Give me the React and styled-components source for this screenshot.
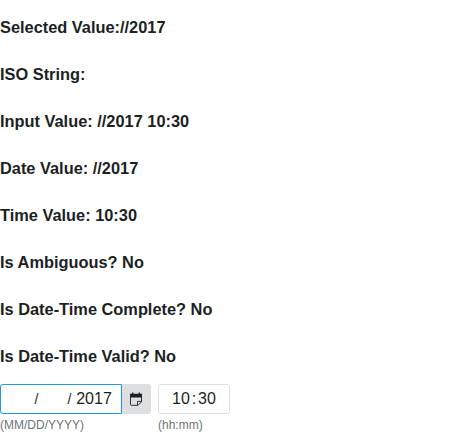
import React, { useState } from "react";
import styled, { createGlobalStyle } from "styled-components";

const GlobalStyle = createGlobalStyle`
  *, *::before, *::after { box-sizing: border-box; }
  body {
    margin: 0;
    background: #fff;
    color: #1c1f23;
    font-family: "Liberation Sans", Arial, sans-serif;
    font-size: 14px;
  }
`;

const Page = styled.main`
  padding-top: 14px;
`;

const Summary = styled.div`
  display: flex;
  flex-direction: column;
  gap: 21px;
`;

/* Keeps the browser's own h3 size, relative to the body text. */
const SummaryLine = styled.h3`
  margin: 0;
  line-height: 26px;
`;

const Fields = styled.form`
  display: flex;
  align-items: flex-start;
  gap: 7px;
  margin-top: 15px;
`;

const Field = styled.fieldset`
  min-width: 0;
  margin: 0;
  padding: 0;
  border: 0;
`;

const Control = styled.div`
  display: flex;
`;

const SegmentBox = styled.div`
  display: flex;
  align-items: center;
  gap: ${(p) => (p.$active ? 2 : 0)}px;
  height: 30px;
  padding: 0 ${(p) => (p.$active ? 7 : 13)}px;
  border: 1px solid ${(p) => (p.$active ? "#1c99e0" : "#dedfe0")};
  border-radius: ${(p) => (p.$active ? "3px 0 0 3px" : "3px")};
  background: #fff;
  font-size: 16px;
`;

const Segment = styled.input`
  width: ${(p) => p.$width}px;
  height: 26px;
  padding: 0;
  border: 0;
  outline: 0;
  background: transparent;
  color: inherit;
  font: inherit;
  text-align: center;
`;

const Separator = styled.span`
  width: ${(p) => p.$width}px;
  font-size: ${(p) => p.$size}px;
  line-height: 26px;
  text-align: center;
`;

const CalendarButton = styled.button`
  display: flex;
  align-items: center;
  width: 29px;
  height: 30px;
  padding: 0 8px;
  border: 0;
  border-radius: 0 3px 3px 0;
  background: #dedfe0;
  color: #1c1f23;
`;

const FormatHint = styled.div`
  margin-top: 4px;
  color: #707378;
  font-size: 12px;
  line-height: 14px;
`;

const summary = (v) => {
  const date = `${v.month}/${v.day}/${v.year}`;
  const time = `${v.hour}:${v.minute}`;
  return [
    `Selected Value:${date}`,
    "ISO String:",
    `Input Value: ${date} ${time}`,
    `Date Value: ${date}`,
    `Time Value: ${time}`,
    "Is Ambiguous? No",
    "Is Date-Time Complete? No",
    "Is Date-Time Valid? No",
  ];
};

function CalendarIcon() {
  return (
    <svg width="12" height="14" viewBox="0 0 12 14" aria-hidden="true">
      <path fill="currentColor" d="M0 1.7h2V.4h1.4v1.3h5.2V.4H10v1.3h2V5.4H0z" />
      <path
        fill="none"
        stroke="currentColor"
        strokeWidth="0.9"
        d="M.5 5v7.5a.8.8 0 0 0 .8.8H8l3.5-3.5V5M7.5 13V9.4h4"
      />
    </svg>
  );
}

export default function App() {
  const [value, setValue] = useState({
    month: "",
    day: "",
    year: "2017",
    hour: "10",
    minute: "30",
  });

  const bind = (name, digits) => ({
    "aria-label": name,
    inputMode: "numeric",
    maxLength: digits,
    value: value[name],
    onChange: (e) => setValue({ ...value, [name]: e.target.value }),
  });

  return (
    <>
      <GlobalStyle />
      <Page>
        <Summary>
          {summary(value).map((line, i) => (
            <SummaryLine key={i}>{line}</SummaryLine>
          ))}
        </Summary>
        <Fields>
          <Field aria-label="Date" aria-describedby="date-format">
            <Control>
              <SegmentBox $active>
                <Segment {...bind("month", 2)} $width={24} />
                <Separator $width={5} $size={14}>/</Separator>
                <Segment {...bind("day", 2)} $width={24} />
                <Separator $width={5} $size={14}>/</Separator>
                <Segment {...bind("year", 4)} $width={40} />
              </SegmentBox>
              <CalendarButton type="button" aria-label="Open calendar">
                <CalendarIcon />
              </CalendarButton>
            </Control>
            <FormatHint id="date-format">(MM/DD/YYYY)</FormatHint>
          </Field>
          <Field aria-label="Time" aria-describedby="time-format">
            <SegmentBox>
              <Segment {...bind("hour", 2)} $width={18} />
              <Separator $width={8} $size={16}>:</Separator>
              <Segment {...bind("minute", 2)} $width={18} />
            </SegmentBox>
            <FormatHint id="time-format">(hh:mm)</FormatHint>
          </Field>
        </Fields>
      </Page>
    </>
  );
}
